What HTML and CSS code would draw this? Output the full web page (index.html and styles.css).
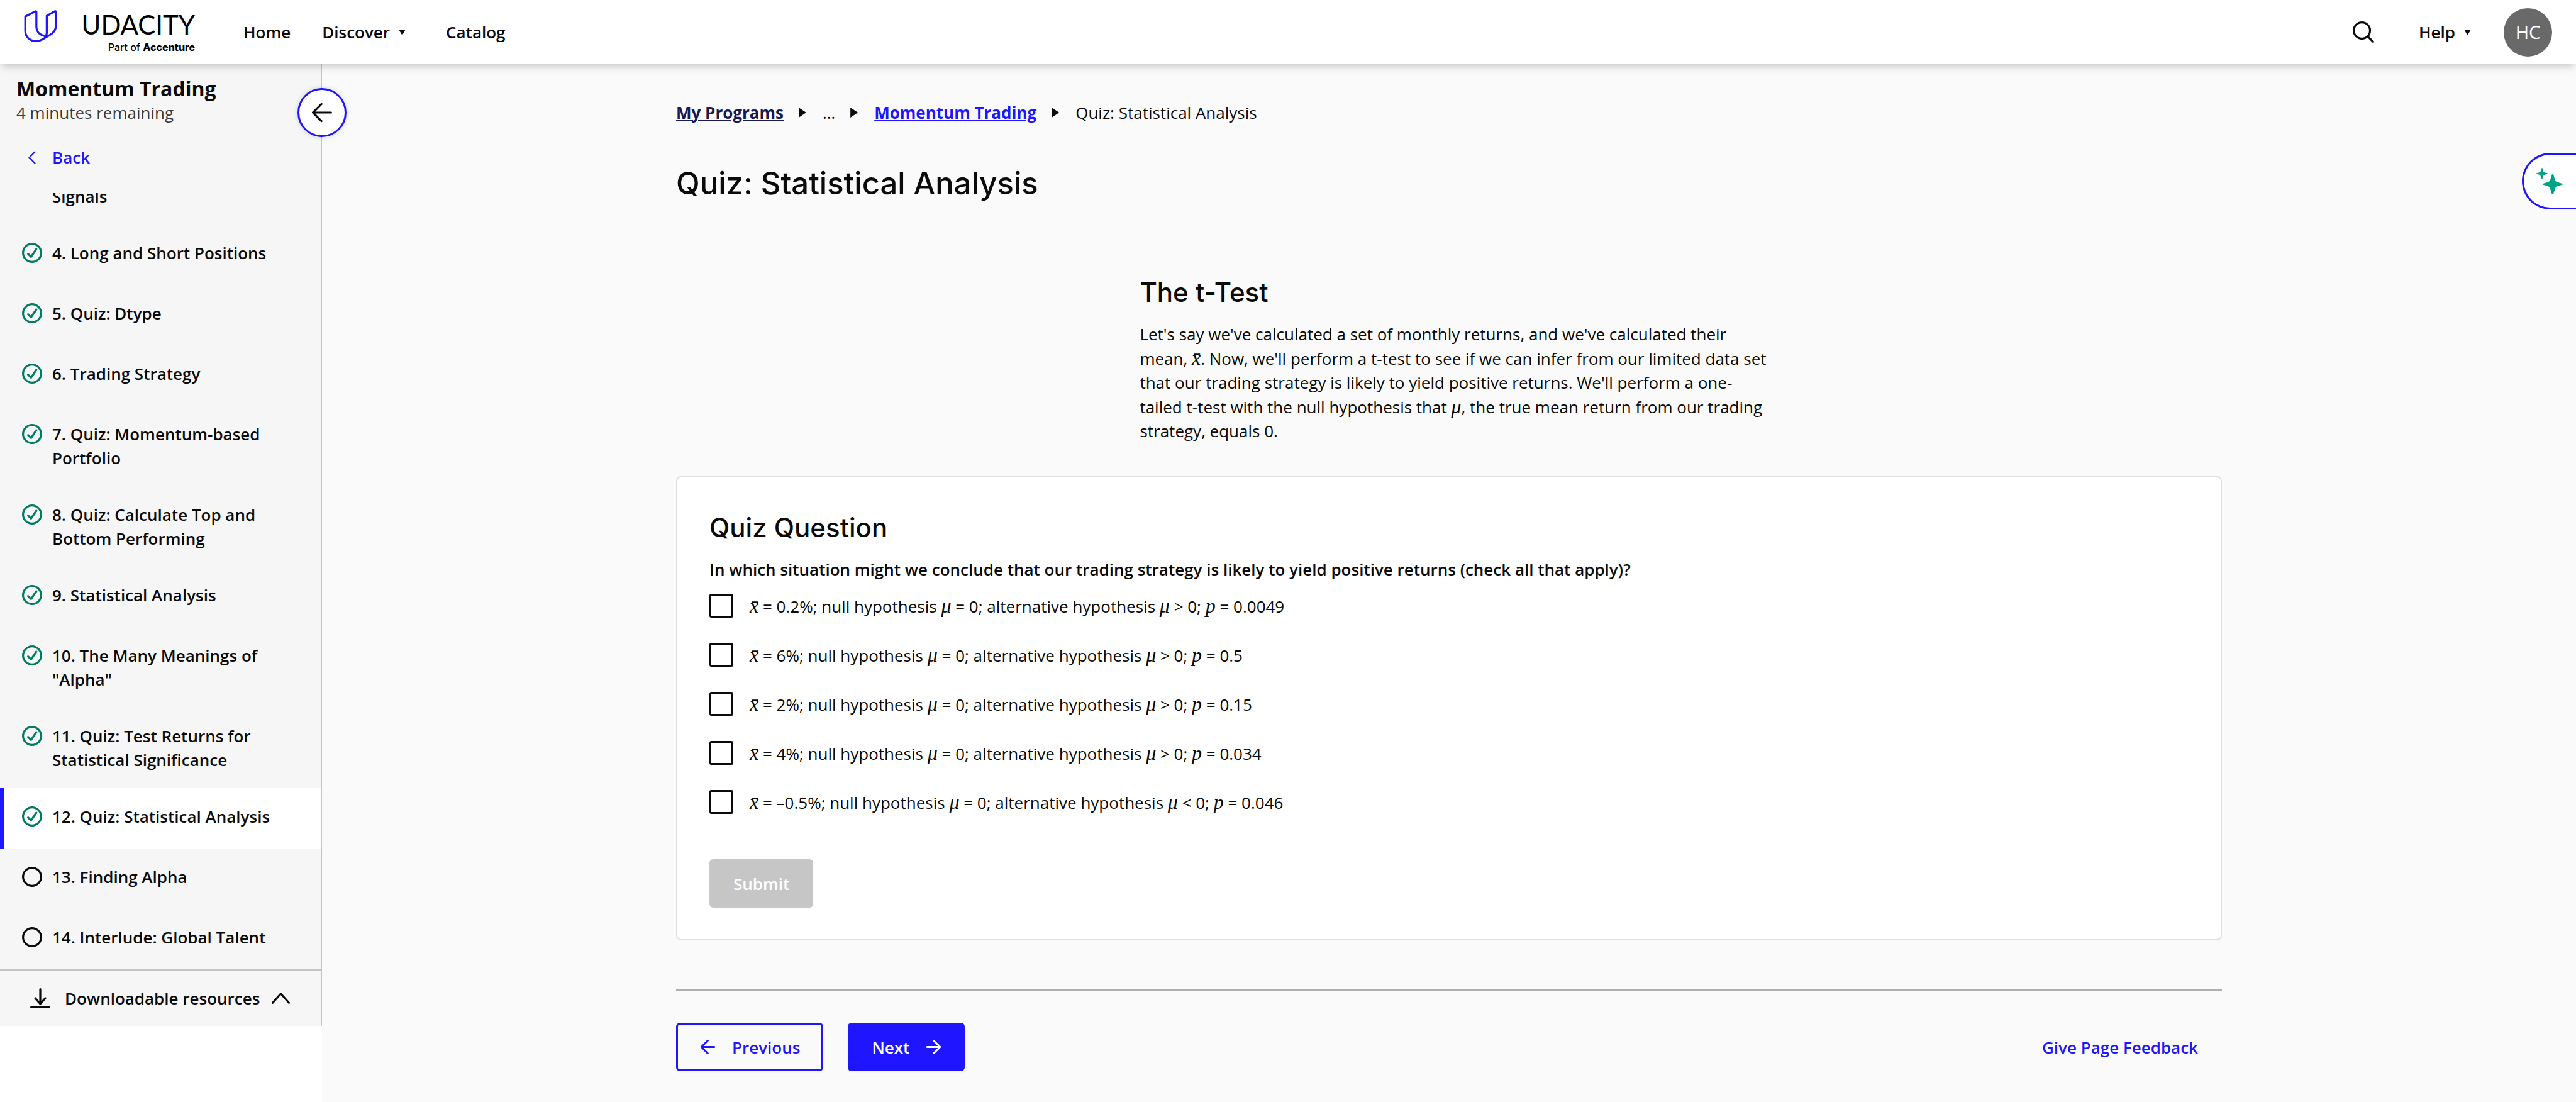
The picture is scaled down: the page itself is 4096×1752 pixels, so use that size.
FILE: index.html
```html
<!DOCTYPE html>
<html lang="en">
<head>
<meta charset="utf-8">
<meta name="viewport" content="width=device-width, initial-scale=1">
<title>Quiz: Statistical Analysis - Udacity</title>
<link rel="stylesheet" href="styles.css">
</head>
<body>
<svg class="sprite" aria-hidden="true">
  <symbol id="done" viewBox="0 0 40 40"><circle cx="20" cy="20" r="18"/><path d="M12 22l6 6L28.500 12.500"/></symbol>
  <symbol id="todo" viewBox="0 0 40 40"><circle cx="20" cy="20" r="18"/></symbol>
  <symbol id="arrow-left" viewBox="0 0 40 40"><path d="M38 20H2M20 2L2 20l18 18"/></symbol>
  <symbol id="arrow-right" viewBox="0 0 40 40"><path d="M2 20h36M20 2l18 18-18 18"/></symbol>
</svg>

<header class="topbar">
  <a class="logo" href="#" aria-label="Udacity, part of Accenture">
    <svg class="logo-mark" viewBox="48 24 206 206"><path d="M182 186C146 182 126 160 126 130V43Q126 37 120 39L60 70V155C60 192 88 217 124 217C140 217 152 212 164 205L205 181C232 166 242 150 242 128V43Q242 36 236 39L188 66V165C188 178 184 186 176 190"/></svg>
    <span class="logo-text">
      <span class="logo-word">UDACITY</span>
      <span class="logo-sub">Part of <b>Accenture</b></span>
    </span>
  </a>
  <nav class="main-nav">
    <a href="#">Home</a>
    <button type="button" class="menu">Discover <svg class="caret" viewBox="0 0 12 10"><path d="M0 0h12L6 10z"/></svg></button>
    <a href="#">Catalog</a>
  </nav>
  <div class="tools">
    <button type="button" class="icon-button" aria-label="Search"><svg class="search" viewBox="0 0 42 42"><circle cx="18" cy="18" r="16"/><path d="M30 30l10 10"/></svg></button>
    <button type="button" class="menu">Help <svg class="caret" viewBox="0 0 12 10"><path d="M0 0h12L6 10z"/></svg></button>
    <button type="button" class="avatar">HC</button>
  </div>
</header>

<div class="layout">
  <aside class="sidebar">
    <div class="lesson-head">
      <h2 class="lesson-title">Momentum Trading</h2>
      <p class="lesson-time">4 minutes remaining</p>
    </div>
    <a class="back" href="#"><svg viewBox="0 0 16 28"><path d="M14 2L2 14l12 12"/></svg>Back</a>
    <ol class="steps">
      <li><a class="step" href="#"><span class="step-name">Signals</span></a></li>
      <li><a class="step" href="#"><svg class="done"><use href="#done"/></svg><span class="step-name">4. Long and Short Positions</span></a></li>
      <li><a class="step" href="#"><svg class="done"><use href="#done"/></svg><span class="step-name">5. Quiz: Dtype</span></a></li>
      <li><a class="step" href="#"><svg class="done"><use href="#done"/></svg><span class="step-name">6. Trading Strategy</span></a></li>
      <li><a class="step" href="#"><svg class="done"><use href="#done"/></svg><span class="step-name">7. Quiz: Momentum-based Portfolio</span></a></li>
      <li><a class="step" href="#"><svg class="done"><use href="#done"/></svg><span class="step-name">8. Quiz: Calculate Top and Bottom Performing</span></a></li>
      <li><a class="step" href="#"><svg class="done"><use href="#done"/></svg><span class="step-name">9. Statistical Analysis</span></a></li>
      <li><a class="step" href="#"><svg class="done"><use href="#done"/></svg><span class="step-name">10. The Many Meanings of "Alpha"</span></a></li>
      <li><a class="step" href="#"><svg class="done"><use href="#done"/></svg><span class="step-name">11. Quiz: Test Returns for Statistical Significance</span></a></li>
      <li><a class="step current" href="#" aria-current="page"><svg class="done"><use href="#done"/></svg><span class="step-name">12. Quiz: Statistical Analysis</span></a></li>
      <li><a class="step" href="#"><svg><use href="#todo"/></svg><span class="step-name">13. Finding Alpha</span></a></li>
      <li><a class="step" href="#"><svg><use href="#todo"/></svg><span class="step-name">14. Interlude: Global Talent</span></a></li>
    </ol>
    <button type="button" class="resources">
      <svg class="download" viewBox="0 0 40 40"><path d="M20 2v30M10 20l10 11 10-11M2 38h36"/></svg>
      Downloadable resources
      <svg class="chevron" viewBox="0 0 36 22"><path d="M2 20L18 2l16 18"/></svg>
    </button>
    <button type="button" class="collapse" aria-label="Collapse sidebar"><svg viewBox="0 0 40 40"><path d="M38 20H2M19 3L2 20l17 17"/></svg></button>
  </aside>

  <main class="main">
    <div class="content">
      <nav aria-label="Breadcrumb">
        <ol class="crumbs">
          <li><a class="root" href="#">My Programs</a></li>
          <li>…</li>
          <li><a href="#">Momentum Trading</a></li>
          <li>Quiz: Statistical Analysis</li>
        </ol>
      </nav>
      <h1>Quiz: Statistical Analysis</h1>

      <section class="reading">
        <h2>The t-Test</h2>
        <p>Let's say we've calculated a set of monthly returns, and we've calculated their mean, <i>x̄</i>. Now, we'll perform a t-test to see if we can infer from our limited data set that our trading strategy is likely to yield positive returns. We'll perform a one-tailed t-test with the null hypothesis that <i>μ</i>, the true mean return from our trading strategy, equals 0.</p>
      </section>

      <form class="card">
        <h2>Quiz Question</h2>
        <fieldset>
          <legend>In which situation might we conclude that our trading strategy is likely to yield positive returns (check all that apply)?</legend>
          <div class="options">
            <label><input type="checkbox" name="a"><span><i>x̄</i> = 0.2%; null hypothesis <i>μ</i> = 0; alternative hypothesis <i>μ</i> &gt; 0; <i>p</i> = 0.0049</span></label>
            <label><input type="checkbox" name="b"><span><i>x̄</i> = 6%; null hypothesis <i>μ</i> = 0; alternative hypothesis <i>μ</i> &gt; 0; <i>p</i> = 0.5</span></label>
            <label><input type="checkbox" name="c"><span><i>x̄</i> = 2%; null hypothesis <i>μ</i> = 0; alternative hypothesis <i>μ</i> &gt; 0; <i>p</i> = 0.15</span></label>
            <label><input type="checkbox" name="d"><span><i>x̄</i> = 4%; null hypothesis <i>μ</i> = 0; alternative hypothesis <i>μ</i> &gt; 0; <i>p</i> = 0.034</span></label>
            <label><input type="checkbox" name="e"><span><i>x̄</i> = –0.5%; null hypothesis <i>μ</i> = 0; alternative hypothesis <i>μ</i> &lt; 0; <i>p</i> = 0.046</span></label>
          </div>
        </fieldset>
        <button type="submit" class="button submit" disabled>Submit</button>
      </form>

      <footer class="pager">
        <a class="button previous" href="#"><svg><use href="#arrow-left"/></svg>Previous</a>
        <a class="button next" href="#">Next<svg><use href="#arrow-right"/></svg></a>
        <a class="feedback" href="#">Give Page Feedback</a>
      </footer>
    </div>
  </main>
</div>

<button type="button" class="assistant" aria-label="Open AI assistant">
  <svg viewBox="0 0 52 52"><path d="M32 12Q33.500 12 34 14C36 22 37 25 39 27C41 28 45 29 51 31Q53 32 51 33C44 35 40 36 39 37C37 39 36 43 34 50Q32 53 30 50C28 43 27 39 25 37C24 36 20 35 13 33Q11 32 13 31C19 29 23 28 25 27C27 25 28 22 30 14Q31 12 32 12z"/><path d="M11 0Q12 0 12.500 2C13.500 7 14 8 15 8C16 9 17 9 21 10Q23 11 21 12C17 13 16 13 15 14C14 15 13.500 16 12.500 20Q11 23 9.500 20C8.500 16 8 15 7 14C6 13 5 13 1 12Q-1 11 1 10C5 9 6 9 7 8C8 8 8.500 7 9.500 2Q10 0 11 0z"/></svg>
</button>
</body>
</html>
```
FILE: styles.css
```css
:root {
  --ink: #0b0b0b;
  --blue: #2015ff;
  --green: #017b62;
  --line: #c4c4c4;
}

* { box-sizing: border-box; }

body {
  margin: 0;
  min-height: 100vh;
  display: flex;
  flex-direction: column;
  position: relative;
  background: #fff;
  color: var(--ink);
  font: 400 26px/38px "Open Sans", "Noto Sans", sans-serif;
}

h1, h2, p, ol, fieldset { margin: 0; padding: 0; border: 0; }
h1, .reading h2, .card h2 { font-family: Inter, sans-serif; font-weight: 500; }
h1 { font-size: 49px; line-height: 60px; margin-top: 64px; }
ol { list-style: none; }
a { color: inherit; text-decoration: none; }
svg { fill: none; stroke: currentColor; stroke-width: 4; stroke-linecap: round; stroke-linejoin: round; flex: none; }
button { border: 0; padding: 0; background: none; color: inherit; font: inherit; cursor: pointer; }
.sprite { display: none; }

/* Top bar */
.topbar {
  position: relative;
  z-index: 2;
  display: flex;
  align-items: center;
  height: 102px;
  padding: 0 38px 0 37px;
  background: #fff;
  box-shadow: 0 6px 12px -3px rgba(0, 0, 0, .22);
  font-weight: 600;
}
.logo { display: flex; align-items: center; color: #000; }
.logo-mark { width: 55px; height: 55px; margin-bottom: 19px; color: var(--blue); stroke-width: 12; }
.logo-text { display: grid; width: 218px; gap: 5px; text-align: right; }
.logo-word { font: 400 42px/42px Lato, sans-serif; }
.logo-sub { font: 500 16px/20px Inter, sans-serif; }
.logo-sub b { font-weight: 800; }
.main-nav { display: flex; align-items: center; margin-left: 77px; }
.main-nav .menu { margin: 0 64px 0 50px; }
.menu { display: flex; align-items: center; gap: 14px; }
.caret { width: 11px; height: 9px; fill: currentColor; stroke: none; }
.tools { display: flex; align-items: center; margin-left: auto; }
.search { display: block; width: 34px; height: 34px; }
.tools .menu { margin: 0 52px 0 71px; }
.avatar {
  width: 77px;
  height: 77px;
  border-radius: 50%;
  background: #696969;
  color: #fff;
  font-size: 29px;
  font-weight: 400;
}

.layout { flex: 1; display: grid; grid-template-columns: 512px 1fr; }

/* Lesson sidebar */
.sidebar {
  position: relative;
  display: flex;
  flex-direction: column;
  height: calc(100vh - 223px);
  border-right: 2px solid var(--line);
  background: #f6f6f6;
  font-weight: 600;
}
.lesson-head { padding: 20px 26px 33px; }
.lesson-title { font-size: 32px; line-height: 38px; font-weight: 700; }
.lesson-time { color: #3b3b3b; font-weight: 400; }
.back { display: flex; align-items: center; gap: 26px; padding: 0 45px 38px; color: var(--blue); }
.back svg { width: 12px; height: 21px; stroke-width: 3; }
.steps { flex: 1; min-height: 0; display: flex; flex-direction: column; justify-content: flex-end; overflow: hidden; }
.steps li { flex: none; }
.step { display: flex; gap: 16px; min-height: 96px; padding: 26px 64px 26px 35px; }
.step svg { width: 32px; height: 32px; margin-top: 3px; }
.step .done { color: var(--green); }
.step-name { margin-right: auto; }
.step-name:first-child { margin-left: 48px; }
li:first-child > .step { min-height: 0; }
.current { padding-left: 29px; border-left: 6px solid var(--blue); background: #fff; }
.resources {
  display: flex;
  align-items: center;
  height: 90px;
  padding: 0 49px 0 48px;
  border-top: 2px solid var(--line);
}
.download { width: 32px; height: 32px; margin-right: 23px; }
.chevron { width: 29px; height: 18px; margin-left: auto; }
.collapse {
  position: absolute;
  top: 38px;
  right: -41px;
  display: grid;
  place-items: center;
  width: 78px;
  height: 78px;
  border: 3px solid var(--blue);
  border-radius: 50%;
  background: #fff;
  box-shadow: 0 0 8px rgba(0, 0, 0, .15);
}
.collapse svg { width: 32px; height: 32px; }

/* Page content */
.main { padding: 58px 64px 50px; background: #fafafa; }
.content { max-width: 2458px; margin: 0 auto; }
.crumbs { display: flex; }
.crumbs li { display: flex; align-items: center; }
.crumbs li + li::before {
  content: "";
  width: 12px;
  height: 16px;
  margin: 0 26px 0 24px;
  background: currentColor;
  clip-path: polygon(0 0, 100% 50%, 0 100%);
}
.crumbs a { color: var(--blue); font-weight: 700; text-decoration: underline; text-decoration-thickness: 2px; }
.crumbs .root { color: #171a53; }

h2 { font-size: 42px; line-height: 58px; }
.reading { margin: 114px 0 53px 30%; max-width: 1004px; }
.reading p { margin-top: 18px; }
i { font-family: "Liberation Serif", serif; font-size: 32px; }

.card { padding: 51px 51px 50px; border: 2px solid #e0e0e0; border-radius: 8px; background: #fff; }
fieldset { margin-top: 18px; }
legend { padding: 0 0 20px; font-weight: 600; }
.options { display: grid; gap: 40px; justify-items: start; }
.options label { display: flex; align-items: center; gap: 26px; height: 38px; }
.options input {
  appearance: none;
  width: 38px;
  height: 38px;
  margin: 0;
  border: 3px solid var(--ink);
  border-radius: 3px;
  background: #fff;
}

.button {
  display: inline-flex;
  align-items: center;
  height: 77px;
  padding: 0 38px;
  border-radius: 6px;
  font-weight: 600;
}
.button svg { width: 23px; height: 23px; stroke-width: 5; }
.submit { margin-top: 72px; background: #c6c6c6; color: #fff; cursor: default; }
.pager { display: flex; align-items: center; margin-top: 78px; padding-top: 51px; border-top: 2px solid #b0b0b0; }
.previous { gap: 27px; padding: 0 34px 0 36px; border: 3px solid var(--blue); color: var(--blue); }
.next { gap: 27px; margin-left: 39px; background: var(--blue); color: #fff; }
.feedback { margin: 0 38px 0 auto; color: var(--blue); font-weight: 600; }

/* Assistant tab on the window edge */
.assistant {
  position: absolute;
  top: 243px;
  right: 0;
  width: 86px;
  height: 90px;
  padding-left: 20px;
  border: 3px solid var(--blue);
  border-right: 0;
  border-radius: 45px 0 0 45px;
  background: #fff;
  color: #00a386;
  text-align: left;
}
.assistant svg { display: block; width: 42px; height: 42px; fill: currentColor; stroke: none; }
```
